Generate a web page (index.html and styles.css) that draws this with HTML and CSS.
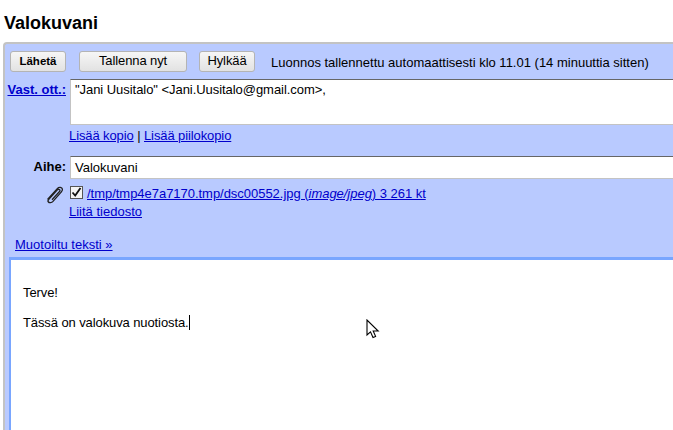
FILE: index.html
```html
<!DOCTYPE html>
<html lang="en">
<head>
    <meta charset="UTF-8">
    <meta name="viewport" content="width=device-width, initial-scale=1.0">
    <title>Valokuvani</title>
    <link rel="stylesheet" href="styles.css">
</head>
<body>
    <h1 class="title">Valokuvani</h1>
    <div class="compose">
        <div class="toolbar">
            <button class="btn btn-send">Lähetä</button>
            <button class="btn btn-save">Tallenna nyt</button>
            <button class="btn btn-discard">Hylkää</button>
            <span class="status">Luonnos tallennettu automaattisesti klo 11.01 (14 minuuttia sitten)</span>
        </div>
        <div class="row row-to">
            <a class="label label-link" href="#">Vast. ott.:</a>
            <div class="field field-to">"Jani Uusitalo" &lt;Jani.Uusitalo@gmail.com&gt;,</div>
        </div>
        <div class="row row-copy">
            <div class="label"></div>
            <div class="links"><a href="#">Lisää kopio</a> | <a href="#">Lisää piilokopio</a></div>
        </div>
        <div class="row row-subject">
            <div class="label label-bold">Aihe:</div>
            <div class="field field-subject">Valokuvani</div>
        </div>
        <div class="row row-attach">
            <div class="label clip-cell">
                <svg class="clip" width="18" height="18" viewBox="0 0 18 18" fill="none" stroke="#222" stroke-width="1.3">
                    <path d="M1.5 13.5 L11.5 2.5 C13 0.8 16 1.2 16.4 3.2 C16.6 4.3 16 5.2 15.4 5.9 L7 15.4 C5.7 16.8 3.4 17.2 2.4 16 C1.6 15 2.2 13.9 3 13 L11.4 3.9 C12.2 3.1 13.8 3.3 14 4.3 C14.1 4.9 13.7 5.4 13.3 5.8 L6 13.8"/>
                </svg>
            </div>
            <div class="attach">
                <div class="attach-file">
                    <span class="check">
                        <svg width="11" height="11" viewBox="0 0 11 11" fill="none" stroke="#111" stroke-width="1.8"><path d="M1.5 5.5 L4.2 8.5 L9.5 1"/></svg>
                    </span>
                    <a href="#">/tmp/tmp4e7a7170.tmp/dsc00552.jpg (<i>image/jpeg</i>) 3 261 kt</a>
                </div>
                <a href="#">Liitä tiedosto</a>
            </div>
        </div>
        <div class="format"><a href="#">Muotoiltu teksti »</a></div>
        <div class="editor">
            <p>Terve!</p>
            <p>Tässä on valokuva nuotiosta.<span class="caret"></span></p>
        </div>
    </div>
    <svg class="pointer" width="14" height="21" viewBox="0 0 14 21">
        <path d="M1 1 L1 16 L4.5 12.8 L7 18.5 L9.6 17.4 L7.2 12 L12.2 12 Z" fill="#fff" stroke="#000" stroke-width="1.1"/>
    </svg>
</body>
</html>
```

FILE: styles.css
```css
html, body {
    height: 100%;
    overflow: hidden;
}
body {
    margin: 0;
    background: #fff;
    font-family: 'Liberation Sans', Arial, sans-serif;
    font-size: 13px;
    color: #000;
}
a {
    color: #0000cc;
}
.title {
    margin: 0;
    padding: 13px 0 0 4px;
    height: 29px;
    font-size: 18px;
    line-height: 20px;
    font-weight: bold;
}
.compose {
    margin: 0 -20px 0 3px;
    height: 388px;
    box-sizing: border-box;
    overflow: hidden;
    background: #b9caff;
    border: 2px solid #c3c3c3;
    border-right: none;
    border-bottom: none;
    border-top-left-radius: 4px;
    padding-top: 7px;
}
.toolbar {
    display: flex;
    align-items: center;
    height: 21px;
    padding-left: 5px;
}
.btn {
    height: 21px;
    padding: 0 0 2px;
    background: linear-gradient(#f6f6f6, #e2e2e2);
    border: 1px solid #b4b4b4;
    border-radius: 3px;
    font-family: inherit;
    font-size: 13px;
    letter-spacing: -0.1px;
    color: #000;
}
.btn-send {
    width: 56px;
    font-weight: bold;
    font-size: 11.5px;
    letter-spacing: 0;
}
.btn-save {
    width: 108px;
    margin-left: 13px;
}
.btn-discard {
    width: 56px;
    margin-left: 12px;
}
.status {
    margin-left: 16px;
    padding-top: 1px;
    white-space: nowrap;
}
.row {
    display: flex;
}
.label {
    flex: none;
    width: 61px;
    margin-right: 4px;
    text-align: right;
}
.label-link {
    font-weight: bold;
    padding-top: 3px;
    height: 15px;
}
.label-bold {
    font-weight: bold;
    padding-top: 3px;
}
.field {
    flex: 1;
    box-sizing: border-box;
    background: #fff;
    border: 1px solid #c3c3c3;
    border-top-color: #666;
    padding-left: 4px;
}
.row-to {
    margin-top: 7px;
}
.field-to {
    height: 46px;
    padding-top: 2px;
    letter-spacing: -0.05px;
}
.row-copy {
    margin-top: 3px;
    height: 28px;
    line-height: 15px;
}
.links {
    margin-left: -1px;
    letter-spacing: -0.1px;
}
.field-subject {
    height: 23px;
    padding-top: 3px;
}
.row-attach {
    margin-top: 6px;
}
.clip-cell {
    display: flex;
    justify-content: flex-end;
    padding-top: 1px;
}
.clip {
    margin-right: 2px;
}
.attach {
    margin-left: -1px;
    line-height: 18px;
}
.attach-file {
    display: flex;
    align-items: center;
    height: 18px;
    letter-spacing: -0.03px;
}
.check {
    box-sizing: border-box;
    width: 13px;
    height: 13px;
    margin: -4px 4px 0 1px;
    background: #f4f4f4;
    border: 1px solid #555;
    display: flex;
    align-items: center;
    justify-content: center;
}
.format {
    margin-top: 15px;
    padding-left: 10px;
    height: 18px;
    line-height: 18px;
}
.editor {
    box-sizing: border-box;
    height: 173px;
    margin: 3px 0 0 4px;
    background: #fff;
    border-top: 3px solid #79a6ff;
    border-left: 2px solid #79a6ff;
    padding: 25px 0 0 12px;
    letter-spacing: -0.1px;
}
.editor p {
    margin: 0 0 15px;
    line-height: 15px;
}
.caret {
    display: inline-block;
    width: 1px;
    height: 15px;
    background: #000;
    vertical-align: -3px;
}
.pointer {
    position: absolute;
    left: 366px;
    top: 319px;
}
```
